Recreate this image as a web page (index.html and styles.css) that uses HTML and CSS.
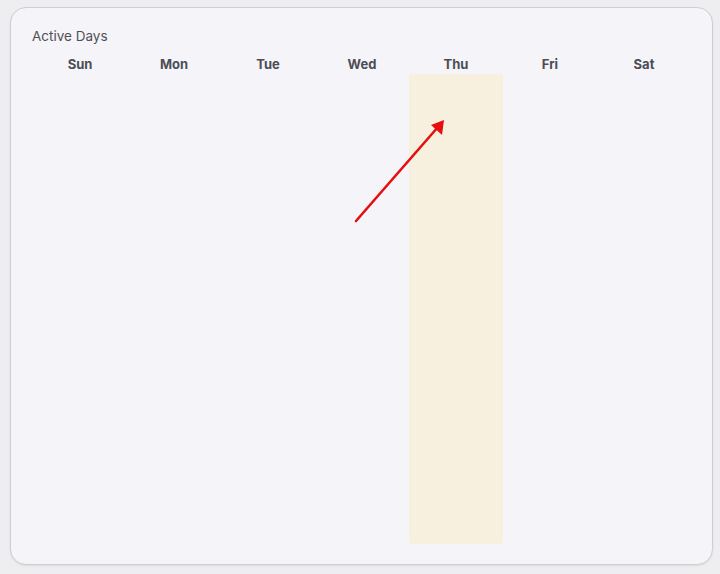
FILE: index.html
```html
<!DOCTYPE html>
<html lang="en">
  <head>
    <meta charset="UTF-8" />
    <title>Active Days</title>
    <link rel="stylesheet" href="styles.css">
  </head>
  <body>
    <div class="card">
      <h2 class="title">Active Days</h2>

      <div class="week">
        <div class="day">
          <div class="day-name">Sun</div>
          <div class="day-bar"></div>
        </div>
        <div class="day">
          <div class="day-name">Mon</div>
          <div class="day-bar"></div>
        </div>
        <div class="day">
          <div class="day-name">Tue</div>
          <div class="day-bar"></div>
        </div>
        <div class="day">
          <div class="day-name">Wed</div>
          <div class="day-bar"></div>
        </div>
        <div class="day">
          <div class="day-name">Thu</div>
          <div class="day-bar active"></div>
        </div>
        <div class="day">
          <div class="day-name">Fri</div>
          <div class="day-bar"></div>
        </div>
        <div class="day">
          <div class="day-name">Sat</div>
          <div class="day-bar"></div>
        </div>
      </div>

      <!-- pointer drawn over the chart -->
      <svg class="pointer" width="120" height="120" viewBox="0 0 120 120">
        <line x1="6" y1="111" x2="88" y2="17" stroke="#e60f0f" stroke-width="2.6" stroke-linecap="round" />
        <polygon points="94,10 92,25 81,15" fill="#e60f0f" />
      </svg>
    </div>
  </body>
</html>
```

FILE: styles.css
```css
body {
  font-family: Inter, "Noto Sans", sans-serif;
  background-color: #eeedf0;
  margin: 0;
  padding: 7px 8px 10px 10px;
}
.card {
  position: relative;
  box-sizing: border-box;
  width: 703px;
  height: 558px;
  background-color: #f5f4f8;
  border: 1px solid #cfced3;
  border-radius: 16px;
  box-shadow: 0 1px 2px rgba(0, 0, 0, 0.08);
  padding: 19px 21px 20px 22px;
  display: flex;
  flex-direction: column;
}
.title {
  margin: 0 0 10px -1px;
  font-size: 13.5px;
  line-height: 18px;
  font-weight: 400;
  color: #4f5056;
}
.week {
  flex: 1;
  display: grid;
  grid-template-columns: repeat(7, 94px);
}
.day {
  display: flex;
  flex-direction: column;
}
.day-name {
  text-align: center;
  font-size: 13px;
  line-height: 19px;
  font-weight: 700;
  color: #4a4d55;
}
.day-bar {
  flex: 1;
  border-radius: 3px;
}
.day-bar.active {
  background-color: #f8f0de;
}
.pointer {
  position: absolute;
  left: 339px;
  top: 102px;
}
```
